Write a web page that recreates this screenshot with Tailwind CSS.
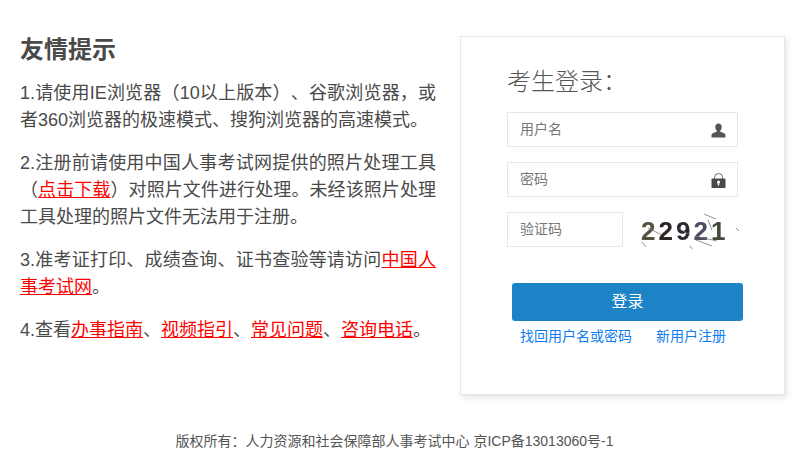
<!DOCTYPE html>
<html lang="zh-CN">
<head>
    <meta charset="UTF-8">
    <meta name="viewport" content="width=device-width, initial-scale=1.0">
    <title>考生登录</title>
    <script src="https://cdn.jsdelivr.net/npm/@tailwindcss/browser@4"></script>
</head>
<body class="bg-white text-[#4a4a4a] font-['Liberation_Sans','Noto_Sans_CJK_SC',sans-serif] overflow-hidden [text-spacing-trim:space-all]">
    <div class="flex items-start pt-9 pl-5">
        <div class="w-[416px] shrink-0">
            <h2 class="text-2xl font-bold leading-[28px] mb-4">友情提示</h2>
            <p class="text-lg text-justify leading-[27px] mb-4">1.请使用IE浏览器（10以上版本）、谷歌浏览器，或者360浏览器的极速模式、搜狗浏览器的高速模式。</p>
            <p class="text-lg text-justify leading-[27px] mb-4">2.注册前请使用中国人事考试网提供的照片处理工具（<a href="#" class="text-[#f00] underline">点击下载</a>）对照片文件进行处理。未经该照片处理工具处理的照片文件无法用于注册。</p>
            <p class="text-lg text-justify leading-[27px] mb-4">3.准考证打印、成绩查询、证书查验等请访问<a href="#" class="text-[#f00] underline">中国人事考试网</a>。</p>
            <p class="text-lg text-justify leading-[27px]">4.查看<a href="#" class="text-[#f00] underline">办事指南</a>、<a href="#" class="text-[#f00] underline">视频指引</a>、<a href="#" class="text-[#f00] underline">常见问题</a>、<a href="#" class="text-[#f00] underline">咨询电话</a>。</p>
        </div>
        <div class="ml-6 w-[325px] h-[359px] shrink-0 border border-[#e7e7e7] shadow-[2px_3px_6px_rgba(0,0,0,0.1)] pl-[46px] pt-[28px]">
            <h3 class="text-2xl font-light text-[#555] leading-[34px] mb-[13px]">考生登录：</h3>
            <div class="relative w-[231px] h-[35px] border border-[#e7e7e7] mb-[15px]">
                <input type="text" placeholder="用户名" class="w-full h-full pl-3 pb-[2px] text-sm outline-none placeholder:text-[#777]">
                <svg class="absolute right-[11px] top-[10px]" width="15" height="15" viewBox="0 0 15 15" fill="#555"><path d="M7.500 0.500c-2 0-3.200 1.500-3.200 3.500 0 1.500.5 2.800 1.400 3.600v1.200c-1.700.7-4.900 1.300-5.200 3.200v2.500h14v-2.500c-.3-1.900-3.500-2.500-5.200-3.200V7.600c.9-.8 1.400-2.100 1.400-3.600 0-2-1.200-3.500-3.200-3.500z"/></svg>
            </div>
            <div class="relative w-[231px] h-[35px] border border-[#e7e7e7] mb-[15px]">
                <input type="password" placeholder="密码" class="w-full h-full pl-3 pb-[2px] text-sm outline-none placeholder:text-[#777]">
                <svg class="absolute right-[11px] top-[10px]" width="15" height="15" viewBox="0 0 15 15"><path d="M3.500 6V4.500a4 4 0 0 1 8 0V6" fill="none" stroke="#666" stroke-width="1"/><rect x="0.500" y="5.500" width="14" height="9.500" rx="0.800" fill="#4a4a4a"/><circle cx="7.500" cy="9" r="1.500" fill="#fff"/><rect x="6.800" y="9" width="1.400" height="3.500" fill="#fff"/></svg>
            </div>
            <div class="flex items-start">
                <input type="text" placeholder="验证码" class="w-[116px] h-[35px] border border-[#e7e7e7] pl-3 pb-[2px] text-sm outline-none placeholder:text-[#777]">
                <div class="relative ml-[17px] w-[100px] h-[40px]">
                    <div class="flex pl-[1px] pt-[4px] font-bold text-[26px] leading-[30px] tracking-[3px] blur-[0.3px]">
                        <span class="text-[#55513f]">2</span><span class="text-[#2e2622]">2</span><span class="text-[#2b2730]">9</span><span class="text-[#4a4d63]">2</span><span class="text-[#3f4a38]">1</span>
                    </div>
                    <svg class="absolute left-0 top-0" width="100" height="40" viewBox="0 0 100 40" fill="none" stroke="#777" stroke-width="0.800"><path d="M8 16l14 7M38 16l12 7M55 24l22 5M64 2l12 5M56 28l16 6M2 30l4 5M96 16l3 3M68 8l4 10M50 34l2 3"/></svg>
                </div>
            </div>
            <button type="button" class="block ml-[5px] mt-[31px] w-[231px] h-[38px] rounded-[3px] bg-[#1c84c6] text-white text-base">登录</button>
            <div class="flex ml-[13px] mt-[6px] gap-6 text-sm leading-[18px] text-[#0f7cf0]">
                <a href="#">找回用户名或密码</a>
                <a href="#">新用户注册</a>
            </div>
        </div>
    </div>
    <div class="mt-[37px] pr-4 text-center text-sm leading-[18px] text-[#555]">版权所有：人力资源和社会保障部人事考试中心 京ICP备13013060号-1</div>
</body>
</html>
